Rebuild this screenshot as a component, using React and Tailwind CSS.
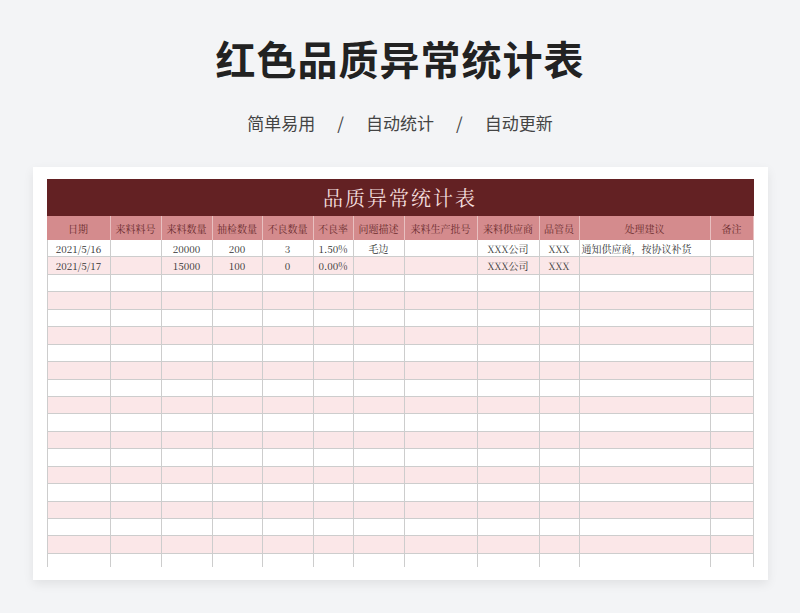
const cols=[64,51,51,50,51,40,51,73,62,40,131,43];
const heads=["日期","来料料号","来料数量","抽检数量","不良数量","不良率","问题描述","来料生产批号","来料供应商","品管员","处理建议","备注"];
const data=[["2021/5/16","","20000","200","3","1.50%","毛边","","XXX公司","XXX","通知供应商，按协议补货",""],["2021/5/17","","15000","100","0","0.00%","","","XXX公司","XXX","",""]];
const gt={gridTemplateColumns:cols.map(c=>c+"px").join(" ")};
export default function App(){
const rows=[...data];while(rows.length<19)rows.push(Array(12).fill(""));
return(<div className="w-[800px] h-[613px] bg-[#f3f4f6] flex flex-col items-center" style={{fontFamily:'"Noto Sans CJK SC",sans-serif'}}>
<h1 className="mt-[32px] text-[40px] leading-[52px] font-bold text-[#222] tracking-[1px]">红色品质异常统计表</h1>
<div className="mt-[27px] text-[17px] leading-[24px] text-[#444] flex gap-[22px]"><span>简单易用</span><span>/</span><span>自动统计</span><span>/</span><span>自动更新</span></div>
<div className="mt-[32px] w-[735px] h-[413px] bg-white shadow-[0_4px_10px_rgba(0,0,0,0.08)] px-[14px] pt-[12px]">
<div className="h-[388px] overflow-hidden" style={{fontFamily:'"Noto Serif CJK SC","Liberation Serif",serif'}}>
<div className="h-[37px] bg-[#632123] text-[#f3dede] text-[20px] flex items-center justify-center tracking-[2px]">品质异常统计表</div>
<div className="grid h-[24px] bg-[#d48b8d] text-[10px] text-[#6b2b2d]" style={gt}>{heads.map((h,i)=><div key={i} className="flex items-center justify-center border-r border-[#e8c0c0]">{h}</div>)}</div>
{rows.map((r,ri)=><div key={ri} className={"grid h-[17.45px] text-[10px] text-[#333] "+(ri%2?"bg-[#fbe7e8]":"bg-white")} style={gt}>{r.map((c,i)=><div key={i} className={"flex items-center border-b border-r border-[#cdcdcd] "+(i===0?"border-l ":"")+(i===10?"justify-start pl-[2px]":"justify-center")}>{c}</div>)}</div>)}
</div></div></div>);}
